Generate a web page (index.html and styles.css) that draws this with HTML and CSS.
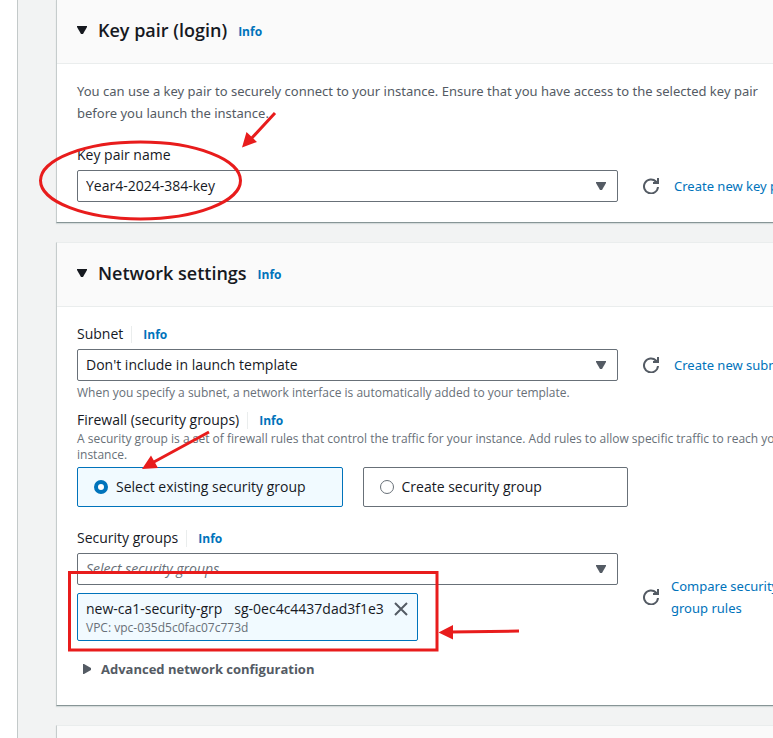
FILE: index.html
```html
<!DOCTYPE html>
<html lang="en">
<head>
<meta charset="utf-8">
<title>Create launch template</title>
<link rel="stylesheet" href="styles.css">
</head>
<body>
<svg class="sprite" aria-hidden="true">
  <symbol id="caret-down" viewBox="0 0 10 8"><path d="M0 0h10v1L6 8H4L0 1z"/></symbol>
  <symbol id="caret-right" viewBox="0 0 8 10"><path d="M0 0h1l7 4v2l-7 4H0z"/></symbol>
  <symbol id="refresh" viewBox="0 0 16 16"><path d="M15 9a7 7 0 1 1-2-5.500l2 1.500M15 0v5h-5" fill="none" stroke="currentColor" stroke-width="2"/><path d="M12 2.500L15 5h-4z" fill="currentColor"/></symbol>
  <symbol id="close" viewBox="0 0 14 14"><path d="M1 1l12 12M13 1L1 13" fill="none" stroke="currentColor" stroke-width="2"/></symbol>
</svg>
<main class="page">
  <section class="card">
    <header class="card-header">
      <svg class="caret"><use href="#caret-down"/></svg>
      <h2>Key pair (login)</h2>
      <a class="info" href="#">Info</a>
    </header>
    <div class="card-body">
      <p class="intro">You can use a key pair to securely connect to your instance. Ensure that you have access to the selected key pair before you launch the instance.</p>
      <div class="label-row"><label for="key">Key pair name</label></div>
      <div class="row">
        <div class="select-box">
          <select id="key"><option>Year4-2024-384-key</option></select>
          <svg class="caret"><use href="#caret-down"/></svg>
        </div>
        <div class="side">
          <button class="icon-button" type="button" aria-label="Refresh key pairs"><svg><use href="#refresh"/></svg></button>
          <a class="action" href="#">Create new key pair</a>
        </div>
      </div>
    </div>
  </section>

  <section class="card card-network">
    <header class="card-header">
      <svg class="caret"><use href="#caret-down"/></svg>
      <h2>Network settings</h2>
      <a class="info" href="#">Info</a>
    </header>
    <div class="card-body">
      <div class="label-row"><label for="subnet">Subnet</label><a class="info split" href="#">Info</a></div>
      <div class="row">
        <div class="select-box">
          <select id="subnet"><option>Don't include in launch template</option></select>
          <svg class="caret"><use href="#caret-down"/></svg>
        </div>
        <div class="side">
          <button class="icon-button" type="button" aria-label="Refresh subnets"><svg><use href="#refresh"/></svg></button>
          <a class="action" href="#">Create new subnet</a>
        </div>
      </div>
      <p class="help help-below">When you specify a subnet, a network interface is automatically added to your template.</p>

      <div class="label-row"><span id="firewall">Firewall (security groups)</span><a class="info split" href="#">Info</a></div>
      <p class="help">A security group is a set of firewall rules that control the traffic for your instance. Add rules to allow specific traffic to reach your instance.</p>
      <div class="tiles" role="radiogroup" aria-labelledby="firewall">
        <label class="tile"><input type="radio" name="firewall" checked>Select existing security group</label>
        <label class="tile"><input type="radio" name="firewall">Create security group</label>
      </div>

      <div class="label-row"><label for="groups">Security groups</label><a class="info split" href="#">Info</a></div>
      <div class="row">
        <div class="stack">
          <div class="select-box">
            <select id="groups" class="placeholder"><option>Select security groups</option></select>
            <svg class="caret"><use href="#caret-down"/></svg>
          </div>
          <div class="token">
            <div>
              <div class="token-name"><span>new-ca1-security-grp</span><span>sg-0ec4c4437dad3f1e3</span></div>
              <div class="help">VPC: vpc-035d5c0fac07c773d</div>
            </div>
            <button class="dismiss" type="button" aria-label="Remove new-ca1-security-grp"><svg><use href="#close"/></svg></button>
          </div>
        </div>
        <div class="side side-tight">
          <button class="icon-button" type="button" aria-label="Refresh security groups"><svg><use href="#refresh"/></svg></button>
          <a class="action wrap" href="#">Compare security group rules</a>
        </div>
      </div>
      <button class="advanced" type="button"><svg><use href="#caret-right"/></svg>Advanced network configuration</button>
    </div>
  </section>

  <section class="card card-next"></section>
</main>

<svg class="marks" viewBox="0 0 773 738" aria-hidden="true">
  <g fill="none" stroke="#e81c1c" stroke-width="3">
    <ellipse cx="140.500" cy="180.500" rx="100" ry="38.500"/>
    <path d="M275 113L250 140M209 432L152 463M519 631L450 632"/>
    <rect x="69.500" y="572.500" width="367.500" height="77.500"/>
  </g>
  <path fill="#e81c1c" d="M242 147.500L246.500 132L257 142zM142 469L151 455.500L158 468zM438.500 632.500L453 625V639.500z"/>
</svg>
</body>
</html>
```
FILE: styles.css
```css
* { box-sizing: border-box; }

body {
  margin: 0;
  position: relative;
  min-height: 100vh;
  overflow: hidden;
  display: flex;
  background: #fff;
  color: #16191f;
  font: 14px/22px "Open Sans", "Noto Sans", sans-serif;
}

h2, p { margin: 0; }
a { color: #0073bb; text-decoration: none; }
button { border: 0; padding: 0; background: none; color: #545b64; font: inherit; }
.sprite { position: absolute; width: 0; height: 0; }

.page {
  flex: 1;
  min-width: 800px;
  min-height: 100vh;
  margin-left: 17px;
  padding-left: 38px;
  border-left: 1px solid #c3c9c9;
  background: #f2f3f3;
  display: flex;
  flex-direction: column;
  gap: 19px;
}

.card {
  background: #fff;
  border-left: 1px solid #c6cccc;
  border-bottom: 1px solid #879596;
  box-shadow: 0 1px 1px #d5dbdb;
}
.card-network, .card-next { border-top: 1px solid #eaeded; }
.card-next { flex: 1; background: #fafafa; border-bottom: 0; }

.card-header {
  display: flex;
  align-items: center;
  height: 64px;
  padding: 0 20px 4px;
  border-bottom: 1px solid #eaeded;
  background: #fafafa;
}
.caret { width: 10px; height: 8px; fill: currentColor; }
.card-header h2 { margin-left: 11px; font-size: 18px; line-height: 22px; font-weight: 600; }
.info { font-size: 12px; font-weight: 700; }
.card-header .info { margin-left: 11px; padding-top: 4px; }

.card-body { padding: 16px 20px 20px; }
.card-network .card-body { padding-bottom: 25px; }
.intro, .action { font-family: "Noto Sans", sans-serif; font-size: 13px; }
.intro { margin-bottom: 20px; color: #545b64; }

.label-row { display: flex; align-items: center; margin-bottom: 4px; }
.split { margin-left: 8px; padding: 1px 0 0 11px; border-left: 1px solid #eaeded; line-height: 16px; }
.help { font-size: 12px; line-height: 16px; color: #687078; }
.help-below { margin: 4px 0 8px; }
.help-below + .label-row { margin-bottom: 0; }

.row {
  display: grid;
  grid-template-columns: minmax(0, 1fr) 157px;
  column-gap: 22px;
  align-items: center;
}
.select-box { position: relative; color: #545b64; }
.select-box .caret { position: absolute; right: 12px; top: 12px; pointer-events: none; }
select {
  display: block;
  width: 100%;
  height: 32px;
  padding: 0 32px 0 8px;
  border: 1px solid #687078;
  border-radius: 2px;
  appearance: none;
  background: #fff;
  color: #16191f;
  font: inherit;
}
select.placeholder { color: #687078; font-style: italic; }

.side { display: flex; align-items: center; gap: 12px; }
.side-tight { gap: 9px; }
.icon-button { flex: none; padding: 0 3px; height: 22px; display: flex; align-items: center; }
.icon-button svg { width: 16px; height: 16px; }
.action { white-space: nowrap; }
.action.wrap { white-space: normal; }

.tiles { display: grid; grid-template-columns: 1fr 1fr; gap: 20px; max-width: 551px; margin: 4px 0 20px; }
.tile {
  display: flex;
  align-items: center;
  gap: 8px;
  height: 40px;
  padding: 0 16px;
  border: 1px solid #687078;
  border-radius: 2px;
}
.tile:has(:checked) { border-color: #0073bb; background: #f1faff; }
.tile input {
  appearance: none;
  width: 14px;
  height: 14px;
  margin: 0;
  border: 1px solid #687078;
  border-radius: 50%;
  background: #fff;
}
.tile input:checked { border: 4px solid #0073bb; }

.token {
  display: flex;
  width: fit-content;
  gap: 10px;
  margin-top: 8px;
  padding: 4px 9px 4px 8px;
  border: 1px solid #0073bb;
  border-radius: 2px;
  background: #f1faff;
}
.token-name { display: flex; gap: 12px; }
.dismiss { height: 22px; display: flex; align-items: center; }
.dismiss svg { width: 14px; height: 14px; }

.advanced { display: flex; align-items: center; gap: 10px; margin-top: 17px; padding-left: 6px; font-size: 13px; font-weight: 700; }
.advanced svg { width: 8px; height: 10px; fill: currentColor; }

.marks { position: absolute; left: 0; top: 0; width: 773px; height: 738px; pointer-events: none; }
```
